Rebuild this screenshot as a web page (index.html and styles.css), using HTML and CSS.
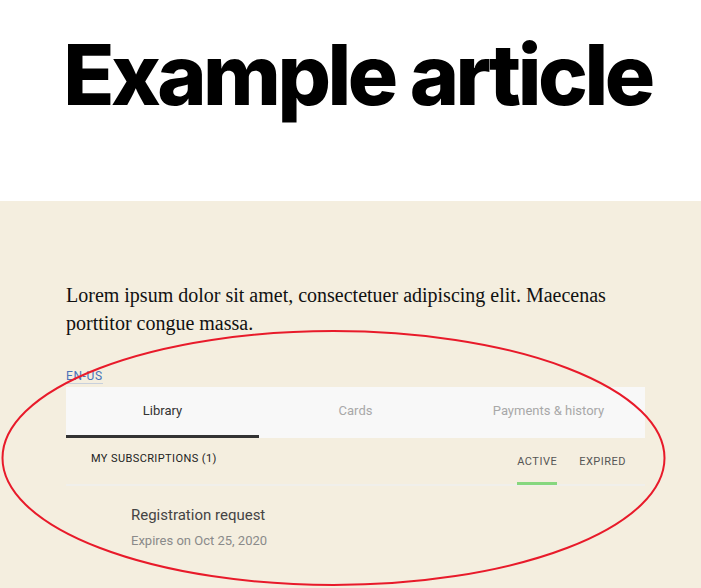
FILE: index.html
```html
<!DOCTYPE html>
<html lang="en">
<head>
    <meta charset="UTF-8">
    <meta name="viewport" content="width=device-width, initial-scale=1.0">
    <title>Example article</title>
    <link rel="stylesheet" href="styles.css">
</head>
<body>
    <!-- Header -->
    <header class="header">
        <h1 class="title">Example article</h1>
    </header>

    <!-- Article body -->
    <main class="article">
        <p class="lead">Lorem ipsum dolor sit amet, consectetuer adipiscing elit. Maecenas porttitor congue massa.</p>

        <a class="locale" href="#">EN-US</a>

        <section class="account">
            <nav class="tabs">
                <a class="tab tab-active" href="#">Library</a>
                <a class="tab" href="#">Cards</a>
                <a class="tab" href="#">Payments &amp; history</a>
            </nav>

            <div class="subs-head">
                <span class="subs-title">My subscriptions (1)</span>
                <div class="filters">
                    <a class="filter filter-active" href="#">Active</a>
                    <a class="filter" href="#">Expired</a>
                </div>
            </div>

            <div class="sub-item">
                <div class="sub-name">Registration request</div>
                <div class="sub-date">Expires on Oct 25, 2020</div>
            </div>
        </section>
    </main>

    <!-- marker around the account widget -->
    <svg class="marker" width="701" height="588" viewBox="0 0 701 588">
        <ellipse cx="333.5" cy="458" rx="331" ry="127" fill="none" stroke="#e81a2a" stroke-width="2"/>
    </svg>
</body>
</html>
```

FILE: styles.css
```css
html, body {
    height: 100%;
    overflow: hidden;
}
body {
    margin: 0;
    padding: 0;
    background-color: #fff;
    font-family: Roboto, Arial, sans-serif;
    position: relative;
}
a {
    text-decoration: none;
}
.header {
    height: 201px;
    padding: 25px 0 0 14px;
    box-sizing: border-box;
}
.title {
    margin: 0;
    font-family: Inter, sans-serif;
    font-weight: 800;
    font-size: 84px;
    letter-spacing: -3.5px;
    line-height: 100px;
    text-align: center;
    color: #000;
}
.article {
    background-color: #f4eedf;
    padding: 80px 56px 0 66px;
    height: 387px;
    box-sizing: border-box;
}
.lead {
    margin: 0 0 28px;
    font-family: "Liberation Serif", serif;
    font-size: 20px;
    line-height: 28px;
    color: #111;
    max-width: 579px;
}
.locale {
    display: inline-block;
    font-size: 12px;
    letter-spacing: 0.6px;
    color: #4a72b8;
    line-height: 14px;
    border-bottom: 1px solid #c8d0dc;
}
.account {
    width: 579px;
    margin-top: 3px;
}
.tabs {
    display: grid;
    grid-template-columns: repeat(3, 1fr);
    background-color: #f8f8f8;
}
.tab {
    height: 51px;
    line-height: 48px;
    text-align: center;
    font-size: 13px;
    color: #a8a8a8;
    border-bottom: 3px solid transparent;
    box-sizing: border-box;
}
.tab-active {
    color: #333;
    border-bottom-color: #333;
}
.subs-head {
    display: flex;
    justify-content: space-between;
    align-items: flex-start;
    padding: 0 19px 0 25px;
    border-bottom: 2px solid #f0efeb;
    height: 48px;
    box-sizing: border-box;
}
.subs-title {
    margin-top: 15px;
    font-size: 11px;
    letter-spacing: 0.4px;
    line-height: 12px;
    text-transform: uppercase;
    color: #222;
}
.filters {
    display: flex;
    gap: 22px;
}
.filter {
    padding-top: 18px;
    height: 47px;
    box-sizing: border-box;
    font-size: 11px;
    letter-spacing: 0.5px;
    line-height: 12px;
    text-transform: uppercase;
    color: #555;
    border-bottom: 3px solid transparent;
    margin-bottom: -2px;
}
.filter-active {
    border-bottom-color: #86d77e;
}
.sub-item {
    padding: 20px 65px;
}
.sub-name {
    font-size: 15px;
    line-height: 18px;
    color: #444;
}
.sub-date {
    margin-top: 9px;
    font-size: 13px;
    line-height: 16px;
    color: #8a8a8a;
}
.marker {
    position: absolute;
    left: 0;
    top: 0;
    pointer-events: none;
}
```
